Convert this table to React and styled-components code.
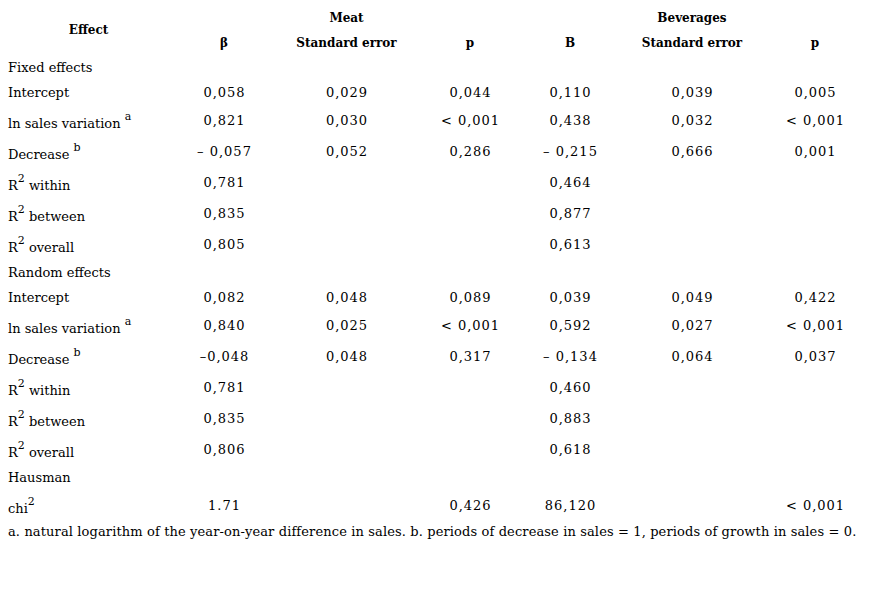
import styled, { createGlobalStyle } from "styled-components";

const GlobalStyle = createGlobalStyle`
  html, body {
    margin: 0;
    padding: 0;
    background: #ffffff;
  }
  body {
    font-family: "DejaVu Serif", "Liberation Serif", serif;
    font-size: 13px;
    color: #000000;
  }
`;

const columns = [163, 122, 123, 124, 76, 168, 78];

const rows = [
  { group: "Fixed effects" },
  { label: "Intercept", v: ["0,058", "0,029", "0,044", "0,110", "0,039", "0,005"] },
  { label: "ln sales variation", note: "a", v: ["0,821", "0,030", "< 0,001", "0,438", "0,032", "< 0,001"] },
  { label: "Decrease", note: "b", v: ["– 0,057", "0,052", "0,286", "– 0,215", "0,666", "0,001"] },
  { r2: "within", v: ["0,781", "", "", "0,464", "", ""] },
  { r2: "between", v: ["0,835", "", "", "0,877", "", ""] },
  { r2: "overall", v: ["0,805", "", "", "0,613", "", ""] },
  { group: "Random effects" },
  { label: "Intercept", v: ["0,082", "0,048", "0,089", "0,039", "0,049", "0,422"] },
  { label: "ln sales variation", note: "a", v: ["0,840", "0,025", "< 0,001", "0,592", "0,027", "< 0,001"] },
  { label: "Decrease", note: "b", v: ["–0,048", "0,048", "0,317", "– 0,134", "0,064", "0,037"] },
  { r2: "within", v: ["0,781", "", "", "0,460", "", ""] },
  { r2: "between", v: ["0,835", "", "", "0,883", "", ""] },
  { r2: "overall", v: ["0,806", "", "", "0,618", "", ""] },
  { group: "Hausman" },
  { chi: true, v: ["1.71", "", "0,426", "86,120", "", "< 0,001"] },
];

function App() {
  return (
    <Page>
      <GlobalStyle />
      <Table>
        <colgroup>
          {columns.map((w, i) => (
            <col key={i} style={{ width: w }} />
          ))}
        </colgroup>
        <thead>
          <tr>
            <HeadLabel rowSpan={2}>Effect</HeadLabel>
            <HeadCell />
            <HeadCell>Meat</HeadCell>
            <HeadCell />
            <HeadCell />
            <HeadCell>Beverages</HeadCell>
            <HeadCell />
          </tr>
          <tr>
            <HeadCell>β</HeadCell>
            <HeadCell>Standard error</HeadCell>
            <HeadCell>p</HeadCell>
            <HeadCell>B</HeadCell>
            <HeadCell>Standard error</HeadCell>
            <HeadCell>p</HeadCell>
          </tr>
        </thead>
        <tbody>
          {rows.map((row, i) => {
            if (row.group) {
              return (
                <Row key={i}>
                  <LabelCell colSpan={7}>{row.group}</LabelCell>
                </Row>
              );
            }
            const tall = Boolean(row.note || row.r2 || row.chi);
            return (
              <Row key={i} $tall={tall}>
                <LabelCell $tall={tall}>
                  {row.label && row.label}
                  {row.note && (
                    <>
                      {" "}
                      <Sup>{row.note}</Sup>
                    </>
                  )}
                  {row.r2 && (
                    <>
                      R<Sup>2</Sup> {row.r2}
                    </>
                  )}
                  {row.chi && (
                    <>
                      chi<Sup>2</Sup>
                    </>
                  )}
                </LabelCell>
                {row.v.map((val, j) => (
                  <ValueCell key={j}>{val}</ValueCell>
                ))}
              </Row>
            );
          })}
        </tbody>
      </Table>
      <Footnote>
        a. natural logarithm of the year-on-year difference in sales. b. periods of decrease in
        sales = 1, periods of growth in sales = 0.
      </Footnote>
    </Page>
  );
}

const Page = styled.div`
  width: 871px;
  height: 594px;
  padding-top: 5px;
  box-sizing: border-box;
`;

const Table = styled.table`
  border-collapse: collapse;
  table-layout: fixed;
  width: 854px;
`;

const HeadCell = styled.th`
  font-weight: bold;
  font-size: 12px;
  text-align: center;
  vertical-align: middle;
  height: 25px;
  padding: 0;
`;

const HeadLabel = styled(HeadCell)`
  text-align: center;
  padding-left: 14px;
`;

const Row = styled.tr`
  height: ${(p) => (p.$tall ? "31px" : "25px")};
`;

const LabelCell = styled.td`
  padding: ${(p) => (p.$tall ? "6px 0 0 8px" : "0 0 0 8px")};
  vertical-align: middle;
  white-space: nowrap;
`;

const ValueCell = styled.td`
  padding: 0 0 0 1px;
  text-align: center;
  vertical-align: middle;
  letter-spacing: 1px;
  white-space: nowrap;
`;

const Sup = styled.sup`
  font-size: 11px;
  line-height: 0;
  vertical-align: 8px;
`;

const Footnote = styled.p`
  margin: 0;
  padding: 3px 0 0 8px;
  letter-spacing: 0.12px;
  white-space: nowrap;
`;

export default App;
